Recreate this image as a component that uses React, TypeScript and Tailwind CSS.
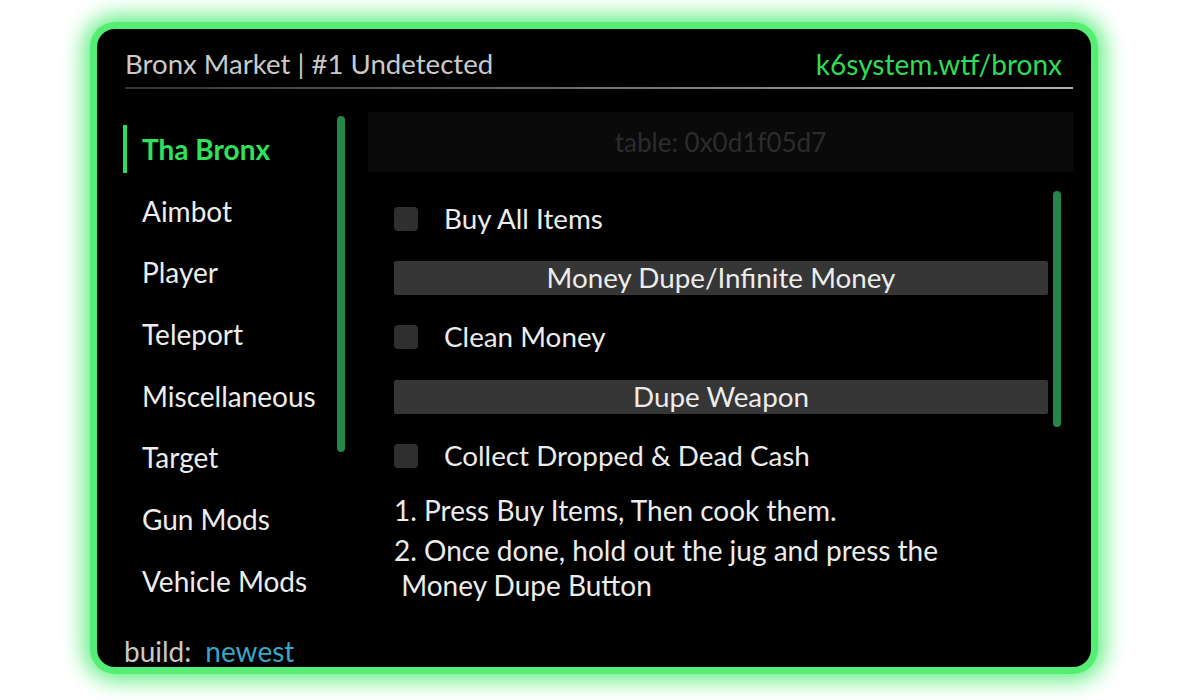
import React from "react";

const font = { fontFamily: "Lato, 'Noto Sans', sans-serif" };

function Check({ label }: { label: string }) {
  return (
    <div className="h-[59.3px] flex items-center">
      <div className="w-6 h-6 rounded-[4px] bg-[#2f2f2f]" />
      <span className="ml-[26px] text-[27.8px] leading-none text-[#ececec]">{label}</span>
    </div>
  );
}

function Btn({ label }: { label: string }) {
  return (
    <div className="h-[59.3px] flex items-center">
      <div className="w-full h-[34px] rounded-[2px] bg-[#363636] flex items-center justify-center text-[27.8px] leading-none text-[#ececec]">
        {label}
      </div>
    </div>
  );
}

export default function App() {
  const tabs = ["Tha Bronx", "Aimbot", "Player", "Teleport", "Miscellaneous", "Target", "Gun Mods", "Vehicle Mods"];
  return (
    <div className="w-[1200px] h-[700px] bg-white pl-[97px] pt-[29px]" style={font}>
      <div className="w-[994px] h-[638px] rounded-[18px] bg-black flex flex-col shadow-[0_0_0_7px_#55ee74,0_0_22px_13px_#5cee7e]">
        <div className="h-[58px] flex items-end justify-between pl-[28px] pr-[29px] pb-[7px]">
          <span className="text-[27.6px] leading-[32px] text-[#c9c9c9]">Bronx Market | #1 Undetected</span>
          <span className="text-[28px] leading-[32px] text-[#2fdc55]">k6system.wtf/bronx</span>
        </div>
        <div className="ml-[28px] mr-[18px] h-[2px] bg-gradient-to-r from-[#3a302c] to-[#b4b0ac]" />
        <div className="flex-1 flex pl-[26px] pr-[18px]">
          <div className="flex mt-[27px] h-[336px]">
            <div className="w-[214px] pt-[2px] flex flex-col">
              {tabs.map((t, i) => (
                <div key={t} className="h-[61.7px] flex items-center gap-[15px] shrink-0">
                  <div className={`w-1 h-[48px] ${i === 0 ? "bg-[#2fdc55]" : "bg-transparent"}`} />
                  <span
                    className={`text-[28px] leading-none whitespace-nowrap ${
                      i === 0 ? "font-bold text-[#2fe25a]" : "text-[#ededed]"
                    }`}
                  >
                    {t}
                  </span>
                </div>
              ))}
            </div>
            <div className="w-2 h-[336px] rounded-full bg-[#23874a]" />
          </div>
          <div className="flex-1 ml-[23px] mt-[23px] flex flex-col">
            <div className="h-[60px] bg-[#0a0a0a] flex items-center justify-center text-[26px] text-[#2c2c2c]">
              table: 0x0d1f05d7
            </div>
            <div className="flex mt-[17px]">
              <div className="flex-1 pl-[26px] pr-[5px]">
                <Check label="Buy All Items" />
                <Btn label="Money Dupe/Infinite Money" />
                <Check label="Clean Money" />
                <Btn label="Dupe Weapon" />
                <Check label="Collect Dropped & Dead Cash" />
                <p className="mt-[7px] text-[28px] leading-[36px] text-[#ececec] whitespace-nowrap">
                  1. Press Buy Items, Then cook them.
                </p>
                <p className="mt-[5px] text-[28px] leading-[35px] text-[#ececec] whitespace-nowrap">
                  2. Once done, hold out the jug and press the
                  <br />
                  {"\u00a0Money Dupe Button"}
                </p>
              </div>
              <div className="w-2 h-[236px] mt-[2px] mr-[12px] rounded-full bg-[#23874a]" />
            </div>
          </div>
        </div>
        <div className="h-[30px] mb-[1px] pl-[27px] flex items-center text-[28px] leading-none">
          <span className="text-[#c9c9c9]">build:</span>
          <span className="ml-[14px] text-[#3aa6c6]">newest</span>
        </div>
      </div>
    </div>
  );
}
